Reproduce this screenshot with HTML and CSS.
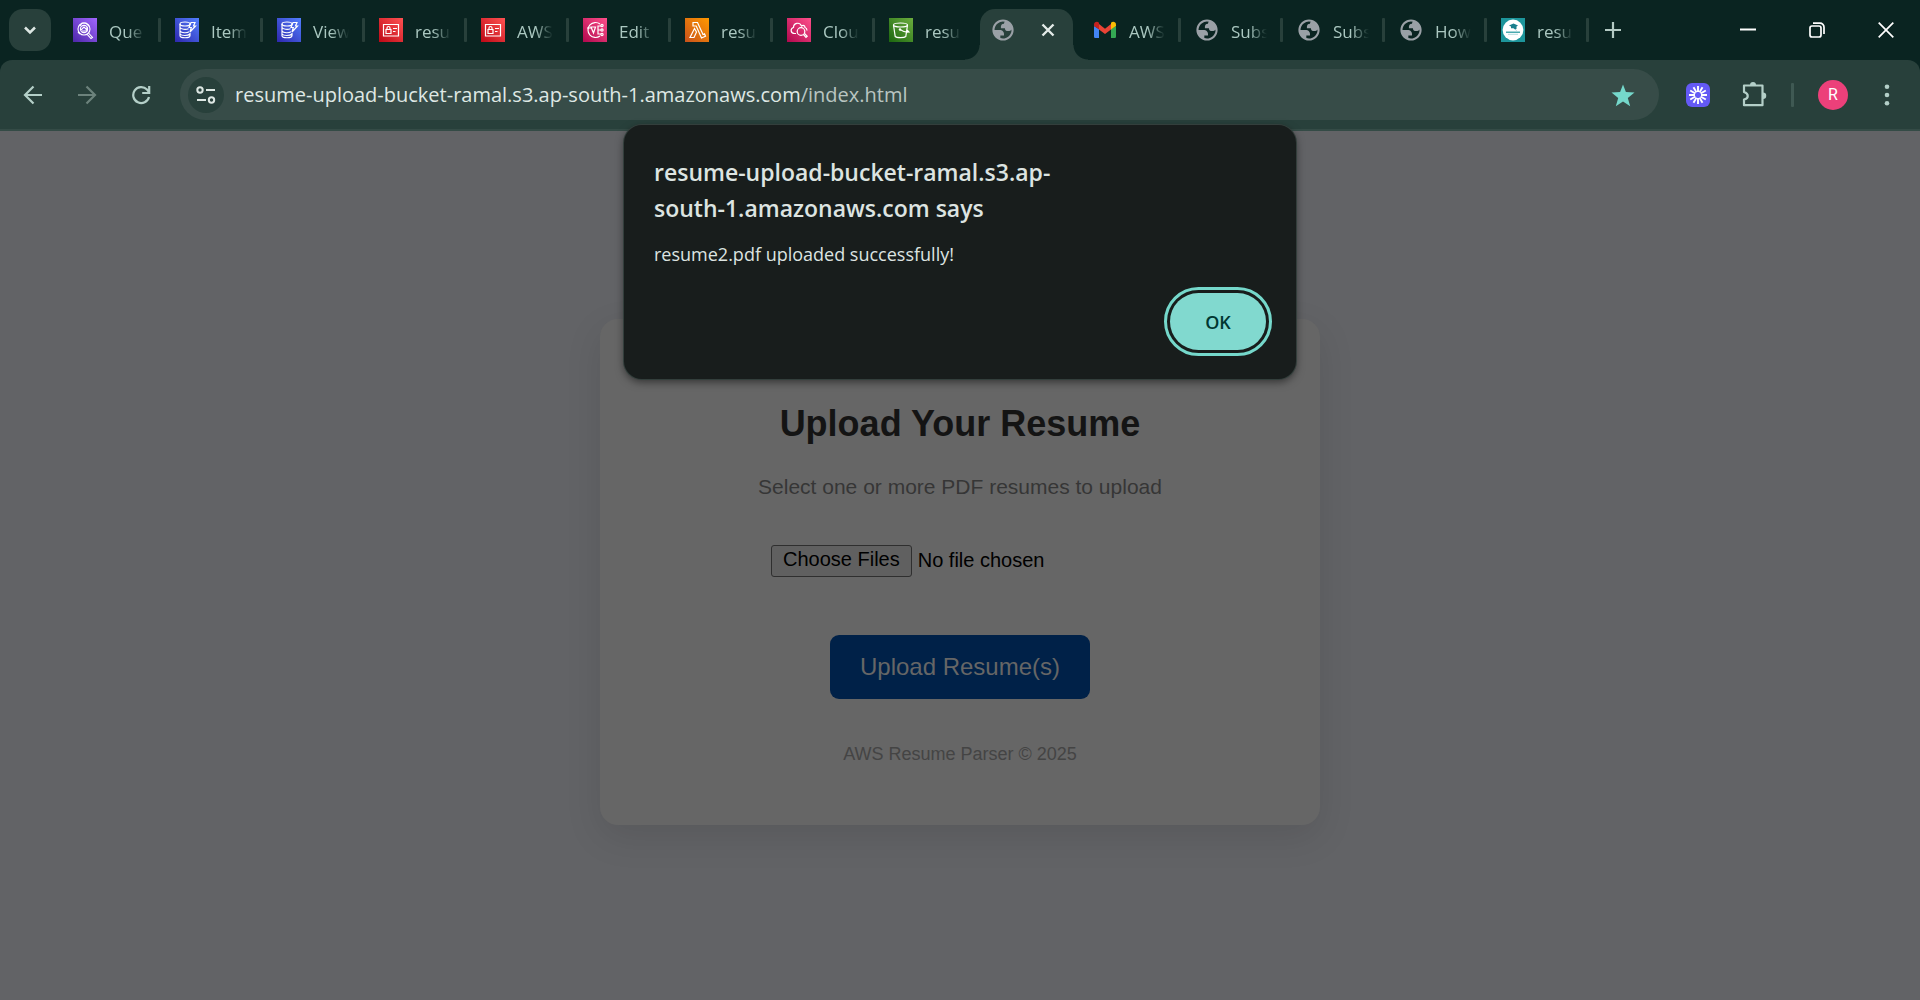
FILE: index.html
```html
<!DOCTYPE html>
<html lang="en">
<head>
<meta charset="utf-8">
<meta name="viewport" content="width=device-width, initial-scale=1">
<title>Upload Your Resume</title>
<link rel="stylesheet" href="styles.css">
</head>
<body>
<svg class="defs" aria-hidden="true">
  <defs>
    <linearGradient id="g-purple" x1="0" y1="1" x2="1" y2="0"><stop offset="0" stop-color="#4d27a8"/><stop offset="1" stop-color="#a166ff"/></linearGradient>
    <linearGradient id="g-blue" x1="0" y1="1" x2="1" y2="0"><stop offset="0" stop-color="#2e27ad"/><stop offset="1" stop-color="#527fff"/></linearGradient>
    <linearGradient id="g-red" x1="0" y1="1" x2="1" y2="0"><stop offset="0" stop-color="#bd0816"/><stop offset="1" stop-color="#ff5252"/></linearGradient>
    <linearGradient id="g-pink" x1="0" y1="1" x2="1" y2="0"><stop offset="0" stop-color="#b0084d"/><stop offset="1" stop-color="#ff4f8b"/></linearGradient>
    <linearGradient id="g-orange" x1="0" y1="1" x2="1" y2="0"><stop offset="0" stop-color="#c8511b"/><stop offset="1" stop-color="#ff9900"/></linearGradient>
    <linearGradient id="g-green" x1="0" y1="1" x2="1" y2="0"><stop offset="0" stop-color="#1b660f"/><stop offset="1" stop-color="#6cae3e"/></linearGradient>
    <symbol id="i-query" viewBox="0 0 24 24"><path fill="url(#g-purple)" d="M0 0h24v24H0z"/><g fill="none" stroke="#fff" stroke-width="1.1"><circle cx="11" cy="11" r="6"/><circle cx="11" cy="11" r="3.600"/><path d="m15.500 15 4 4.500-1.500 1-3.800-4.200M7 8l2-3h4l3 3M8 12l3-3 3 3M9 13h5V9M5 14l2 2"/></g></symbol>
    <symbol id="i-dynamo" viewBox="0 0 24 24"><path fill="url(#g-blue)" d="M0 0h24v24H0z"/><g fill="none" stroke="#fff" stroke-width="1.2"><ellipse cx="10" cy="6" rx="5" ry="2"/><path d="M5 6v11.500c0 3 10 3 10 0V15M5 9.500c1 2 6 2.200 8.500 1.200M5 13c1.500 2.200 7 2.200 9 .8M5 16c1.500 2 8 2 10 0M16 4.500h4l-1.500 3.500h2l-5.500 6 1.300-4.500H14z"/></g></symbol>
    <symbol id="i-iam" viewBox="0 0 24 24"><path fill="url(#g-red)" d="M0 0h24v24H0z"/><g fill="none" stroke="#fff" stroke-width="1.200"><path d="M4.500 6.500h15v11.500h-15zM7 11.500h5v4H7zM8 11.500V10c0-2 3-2 3 0v1.500M14 10.500h4M14 13.500h2.500"/></g></symbol>
    <symbol id="i-event" viewBox="0 0 24 24"><path fill="url(#g-pink)" d="M0 0h24v24H0z"/><g fill="none" stroke="#fff" stroke-width="1.200"><path d="M17 6a7.500 7.500 0 1 0 0 12M4 10h4M8 9h4.500l-2 6zM15 12h3M15 12V8h3M15 12v4h3"/><circle cx="19" cy="7.500" r="1.100"/><circle cx="19" cy="12" r="1.100"/><circle cx="19" cy="16.500" r="1.100"/></g></symbol>
    <symbol id="i-lambda" viewBox="0 0 24 24"><path fill="url(#g-orange)" d="M0 0h24v24H0z"/><path fill="none" stroke="#fff" stroke-width="1.200" d="M8 4.500h4.500L18 16.500l1.500-.7 1 2.500-4 1.700-5.300-12H8zM9.500 10.500 5 19.500h4l2.500-5.500z"/></symbol>
    <symbol id="i-cloud" viewBox="0 0 24 24"><path fill="url(#g-pink)" d="M0 0h24v24H0z"/><g fill="none" stroke="#fff" stroke-width="1.200"><path d="M9 15.500H7.500c-4 0-4.500-5-1-6 0-4.500 6-6 8-1.500 2-1.500 3.500 0 3.500 1.500 1.500.500 2 1.500 2 3"/><circle cx="14" cy="13.500" r="3.800"/><path d="m16.500 16.500 2.500 2.800 1.200-1-2.700-3"/></g></symbol>
    <symbol id="i-bucket" viewBox="0 0 24 24"><path fill="url(#g-green)" d="M0 0h24v24H0z"/><g fill="none" stroke="#fff" stroke-width="1.200"><ellipse cx="11.500" cy="7" rx="7" ry="2"/><path d="m4.500 7 1.700 11.500c1.500 1.600 9 1.600 10.600 0L18.500 7M11 11.500c3 2 6 3 9 2.500l-2-2"/></g><circle cx="11" cy="11.500" r="1.200" fill="#fff"/></symbol>
    <symbol id="i-globe" viewBox="0.700 0.700 22.600 22.600"><path fill="#9aa0a6" fill-rule="evenodd" d="M12 2a10 10 0 1 1 0 20 10 10 0 0 1 0-20zM4 12h4.400c3.407.022 4.922 1.730 4.543 5.127H9.488v2.470a8.004 8.004 0 0 0 10.498-8.083C19.327 12.504 18.332 13 17 13c-2.137 0-3.206-.916-3.206-2.750h-3.748c-.274-2.728.683-4.092 2.870-4.092 0-.975.327-1.597.811-1.970A8.004 8.004 0 0 0 4 12z"/></symbol>
    <symbol id="i-gmail" viewBox="0 0 24 24"><path fill="#4285f4" d="M1 8v10.500c0 1 .7 1.500 1.500 1.500H6V11z"/><path fill="#34a853" d="M23 8v10.500c0 1-.7 1.500-1.500 1.500H18V11z"/><path fill="#ea4335" d="m6 6 6 4.700L18 6v5.500l-6 4.600-6-4.600z"/><path fill="#c5221f" d="M1 8V6.500C1 4 4 3 6 4.700v6.800z"/><path fill="#fbbc04" d="M23 8V6.500C23 4 20 3 18 4.700v6.800z"/></symbol>
    <symbol id="i-campus" viewBox="0 0 24 24"><path fill="#1d959b" d="M0 0h24v24H0z"/><circle cx="12" cy="12" r="10.400" fill="#fff"/><path fill="#1a7f8e" d="m8 7.500 4.500-2 4.500 2-1.500.9v2.600h-1.500l2 1.500-1-.2-2.500-2h-2.500V8.500z"/><path stroke="#1d959b" stroke-width="1.200" d="M5 14.200h14"/><path stroke="#b5dcde" d="M7 16.300h10"/></symbol>
  </defs>
</svg>

<header class="chrome">
  <div class="tabstrip">
    <button class="tab-search" aria-label="Search tabs"><svg width="24" height="24" viewBox="0 0 24 24"><path d="m7 9.500 5 5 5-5" fill="none" stroke="#dde7e3" stroke-width="2.500"/></svg></button>
    <nav class="tabs" aria-label="Open tabs">
      <a class="tab" href="#"><svg class="favicon"><use href="#i-query"/></svg><span class="tab-title">Que</span></a>
      <a class="tab" href="#"><svg class="favicon"><use href="#i-dynamo"/></svg><span class="tab-title">Item</span></a>
      <a class="tab" href="#"><svg class="favicon"><use href="#i-dynamo"/></svg><span class="tab-title">View</span></a>
      <a class="tab" href="#"><svg class="favicon"><use href="#i-iam"/></svg><span class="tab-title">resu</span></a>
      <a class="tab" href="#"><svg class="favicon"><use href="#i-iam"/></svg><span class="tab-title">AWS</span></a>
      <a class="tab" href="#"><svg class="favicon"><use href="#i-event"/></svg><span class="tab-title">Edit</span></a>
      <a class="tab" href="#"><svg class="favicon"><use href="#i-lambda"/></svg><span class="tab-title">resu</span></a>
      <a class="tab" href="#"><svg class="favicon"><use href="#i-cloud"/></svg><span class="tab-title">Clou</span></a>
      <a class="tab no-rule" href="#"><svg class="favicon"><use href="#i-bucket"/></svg><span class="tab-title">resu</span></a>
      <div class="tab tab-active"><svg class="favicon"><use href="#i-globe"/></svg><button class="tab-close" aria-label="Close tab"><svg width="14" height="14" viewBox="0 0 14 14"><path d="m1.500 1.500 11 11m0-11-11 11" stroke="#e4ebe8" stroke-width="2.400"/></svg></button></div>
      <a class="tab" href="#"><svg class="favicon"><use href="#i-gmail"/></svg><span class="tab-title">AWS</span></a>
      <a class="tab" href="#"><svg class="favicon"><use href="#i-globe"/></svg><span class="tab-title">Subs</span></a>
      <a class="tab" href="#"><svg class="favicon"><use href="#i-globe"/></svg><span class="tab-title">Subs</span></a>
      <a class="tab" href="#"><svg class="favicon"><use href="#i-globe"/></svg><span class="tab-title">How</span></a>
      <a class="tab" href="#"><svg class="favicon"><use href="#i-campus"/></svg><span class="tab-title">resu</span></a>
    </nav>
    <button class="new-tab" aria-label="New tab"><svg width="16" height="16" viewBox="0 0 16 16"><path d="M8 0v16M0 8h16" stroke="#b4cac4" stroke-width="2.200"/></svg></button>
    <div class="window-controls">
      <button aria-label="Minimize"><svg width="16" height="16" viewBox="0 0 16 16"><path d="M0 7.500h16" stroke="#fff" stroke-width="2"/></svg></button>
      <button aria-label="Restore"><svg width="16" height="16" viewBox="0 0 16 16" fill="none" stroke="#fff" stroke-width="1.700"><rect x="1" y="4" width="11" height="11" rx="2"/><path d="M4 1.200h7a4 4 0 0 1 4 4V12"/></svg></button>
      <button aria-label="Close"><svg width="16" height="16" viewBox="0 0 16 16"><path d="m.7.7 14.600 14.600m0-14.600L.7 15.300" stroke="#fff" stroke-width="1.700"/></svg></button>
    </div>
  </div>

  <div class="toolbar">
    <button class="nav-button" aria-label="Back"><svg width="20" height="20" viewBox="0 0 20 20"><path d="M19 10H2.500M10.500 1.500 2 10l8.500 8.500" fill="none" stroke="#b4cfc8" stroke-width="2.200"/></svg></button>
    <button class="nav-button" aria-label="Forward" disabled><svg width="20" height="20" viewBox="0 0 20 20"><path d="M1 10h16.500M9.500 1.500 18 10l-8.500 8.500" fill="none" stroke="#6c827c" stroke-width="2.200"/></svg></button>
    <button class="nav-button" aria-label="Reload"><svg width="20" height="20" viewBox="0 0 20 20"><path d="M18 12a8 8 0 1 1-2-7.500L18 7M18.200 1v7h-7" fill="none" stroke="#b4cfc8" stroke-width="2.200"/></svg></button>
    <div class="omnibox">
      <button class="site-info" aria-label="View site information"><svg width="20" height="18" viewBox="0 0 20 18" fill="none" stroke="#dde7e3" stroke-width="2"><circle cx="4" cy="4" r="2.700"/><path d="M10 4h9M1 14h9"/><circle cx="15.500" cy="14" r="2.700"/></svg></button>
      <div class="url">resume-upload-bucket-ramal.s3.ap-south-1.amazonaws.com<span class="url-path">/index.html</span></div>
      <button class="bookmark" aria-label="Edit bookmark"><svg width="24" height="24" viewBox="0 0 24 24"><path fill="#75d8cb" d="m12 1.500 2.900 7.500 8.600.6-6.700 5.300 2.400 8.400-7.200-4.900-7.200 4.900 2.400-8.400L.5 9.600 9.100 9z"/></svg></button>
    </div>
    <div class="actions">
      <button aria-label="Extension"><svg width="26" height="26" viewBox="0 0 26 26"><rect x="1" y="1" width="24" height="24" rx="6" fill="#6459f5"/><g stroke="#fff" stroke-width="1.900"><path d="M13 4v6M13 16v6M4 13h6M16 13h6M8.500 5.200l3 5.200M14.500 15.600l3 5.200M17.500 5.200l-3 5.200M11.500 15.600l-3 5.200M5.200 8.500l5.200 3M15.600 14.500l5.200 3M20.800 8.500l-5.200 3M10.400 14.500l-5.200 3"/></g></svg></button>
      <button aria-label="Extensions"><svg width="26" height="26" viewBox="0 0 26 26"><path d="M3 3.500h18.500v19.700H3v-5.700c5-1 5-6 0-7.500z" fill="none" stroke="#b4cfc8" stroke-width="2.200" stroke-linejoin="round"/><path fill="#b4cfc8" d="M9 3a3 3 0 0 1 6 0zM22 10.500a3 3 0 0 1 0 6.500z"/></svg></button>
      <span class="divider"></span>
      <button class="avatar" aria-label="Profile">R</button>
      <button class="menu" aria-label="Menu"><svg width="6" height="22" viewBox="0 0 6 22" fill="#b4cfc8"><circle cx="3" cy="2.800" r="2.300"/><circle cx="3" cy="11" r="2.300"/><circle cx="3" cy="19.200" r="2.300"/></svg></button>
    </div>
  </div>
</header>

<main class="page">
  <form class="card">
    <h1>Upload Your Resume</h1>
    <p class="lead"><label for="files">Select one or more PDF resumes to upload</label></p>
    <input class="files" id="files" type="file" accept="application/pdf" multiple>
    <button class="upload" type="button">Upload Resume(s)</button>
    <p class="credit">AWS Resume Parser © 2025</p>
  </form>
</main>

<section class="dialog" role="alertdialog" aria-labelledby="dialog-title" aria-describedby="dialog-text">
  <h2 id="dialog-title">resume-upload-bucket-ramal.s3.ap-<br>south-1.amazonaws.com says</h2>
  <p id="dialog-text">resume2.pdf uploaded successfully!</p>
  <button class="ok" type="button">OK</button>
</section>
</body>
</html>
```
FILE: styles.css
```css
* {
  box-sizing: border-box;
}

body {
  position: relative;
  display: flex;
  flex-direction: column;
  min-height: 100vh;
  margin: 0;
  background: #626366;
  font-family: "Open Sans", "Noto Sans", sans-serif;
}

button {
  display: flex;
  align-items: center;
  justify-content: center;
  flex: none;
  padding: 0;
  border: 0;
  background: none;
  font: inherit;
}

svg {
  display: block;
}

.defs {
  position: absolute;
  width: 0;
  height: 0;
}

/* Tab strip */
.chrome {
  background: #0a2421;
}

.tabstrip {
  display: flex;
  height: 60px;
  padding-left: 9px;
}

.tab-search {
  width: 42px;
  height: 42px;
  margin: 9px 7px 0 0;
  border-radius: 14px;
  background: #28403b;
}

.tabs {
  display: flex;
}

.tab {
  position: relative;
  display: flex;
  align-items: center;
  gap: 12px;
  width: 102px;
  padding-left: 15px;
  color: #abc8c1;
  font-size: 17px;
  line-height: 24px;
  text-decoration: none;
}

.tab::after {
  content: "";
  position: absolute;
  top: 18px;
  right: -1px;
  width: 3px;
  height: 24px;
  border-radius: 1px;
  background: #28403b;
}

.tab.no-rule::after {
  display: none;
}

.favicon {
  flex: none;
  width: 24px;
  height: 24px;
}

.tab-title {
  width: 44px;
  white-space: nowrap;
  padding-top: 3px;
  -webkit-mask-image: linear-gradient(90deg, #000 18px, transparent 36px);
  mask-image: linear-gradient(90deg, #000 18px, transparent 36px);
}

.tab-active {
  width: 93px;
  height: 51px;
  margin: 9px 5px 0 4px;
  padding: 0 18px 9px 11px;
  justify-content: space-between;
  border-radius: 15px 15px 0 0;
  background: #28403b;
}

.tab-active::before,
.tab-active::after {
  content: "";
  position: absolute;
  top: auto;
  bottom: 0;
  width: 15px;
  height: 15px;
  border-radius: 0;
}

.tab-active::before {
  left: -15px;
  background: radial-gradient(circle at 0 0, transparent 14px, #28403b 15px);
}

.tab-active::after {
  right: -15px;
  background: radial-gradient(circle at 100% 0, transparent 14px, #28403b 15px);
}

.new-tab {
  width: 50px;
}

.window-controls {
  display: flex;
  margin-left: auto;
}

.window-controls button {
  width: 69px;
}

/* Toolbar */
.toolbar {
  display: flex;
  align-items: center;
  height: 71px;
  padding: 0 22px 0 6px;
  border-bottom: 2px solid #344b46;
  border-radius: 12px 12px 0 0;
  background: #28403b;
}

.nav-button {
  width: 54px;
  height: 50px;
}

.omnibox {
  display: flex;
  align-items: center;
  flex: 1;
  height: 51px;
  margin: 0 26px 0 12px;
  padding: 0 24px 0 8px;
  border-radius: 26px;
  background: #374c48;
}

.site-info {
  width: 36px;
  height: 36px;
  border-radius: 50%;
  background: #28403b;
}

.url {
  flex: 1;
  padding-left: 11px;
  color: #dfe8e4;
  font-size: 20px;
  line-height: 28px;
}

.url-path {
  color: #b9c5c1;
}

.actions {
  display: flex;
  align-items: center;
}

.actions button {
  margin-right: 30px;
}

.divider {
  width: 3px;
  height: 24px;
  margin-right: 24px;
  margin-left: -6px;
  border-radius: 1px;
  background: #3f5953;
}

.actions .avatar {
  width: 30px;
  height: 30px;
  margin-right: 36px;
  border-radius: 50%;
  background: #ec407a;
  color: #fff;
  font-family: Roboto, sans-serif;
  font-size: 16px;
}

.actions .menu {
  margin-right: 8px;
}

/* Upload page, dimmed behind the dialog */
.page {
  display: flex;
  flex: 1;
  align-items: center;
  justify-content: center;
  padding-top: 12px;
  font-family: "Liberation Sans", Arial, sans-serif;
}

.card {
  display: flex;
  flex-direction: column;
  align-items: center;
  width: 720px;
  padding: 84px 60px 60px;
  border-radius: 18px;
  background: #666;
  box-shadow: 0 12px 36px rgba(0, 0, 0, 0.1);
}

.card h1 {
  margin: 0 0 30px;
  color: #141414;
  font-size: 36px;
  line-height: 42px;
}

.lead {
  margin: 0 0 46px;
  color: #363636;
  font-size: 21px;
  line-height: 24px;
}

.files {
  width: 378px;
  margin-bottom: 58px;
  color: #000;
  font-family: inherit;
  font-size: 20px;
}

.files::file-selector-button {
  height: 32px;
  margin-right: 6px;
  padding: 0 11px 2px;
  border: 1px solid #2f2f2f;
  border-radius: 3px;
  background: #606060;
  color: #000;
  font: inherit;
}

.upload {
  height: 64px;
  margin-bottom: 45px;
  padding: 0 30px;
  border-radius: 9px;
  background: #002148;
  color: #666;
  font-size: 24px;
}

.credit {
  margin: 0;
  color: #444;
  font-size: 18px;
  line-height: 21px;
}

/* Alert dialog */
.dialog {
  position: absolute;
  top: 125px;
  right: 0;
  left: 0;
  display: flex;
  flex-direction: column;
  width: 672px;
  margin: 0 auto;
  padding: 29px 30px;
  border-radius: 18px;
  background: #181d1c;
  box-shadow: 0 0 0 1px #333f3c, 0 3px 8px rgba(0, 0, 0, 0.5);
  color: #dde4e1;
}

.dialog h2 {
  margin: 0 0 14px;
  font-size: 23px;
  font-weight: 600;
  line-height: 36px;
}

.dialog p {
  margin: 0 0 25px;
  font-size: 18px;
  line-height: 28px;
}

.ok {
  align-self: flex-end;
  width: 96px;
  height: 57px;
  border-radius: 29px;
  outline: 3px solid #75d8cb;
  outline-offset: 3px;
  background: #81d9cf;
  color: #003731;
  font-size: 18px;
  font-weight: 600;
}
```
